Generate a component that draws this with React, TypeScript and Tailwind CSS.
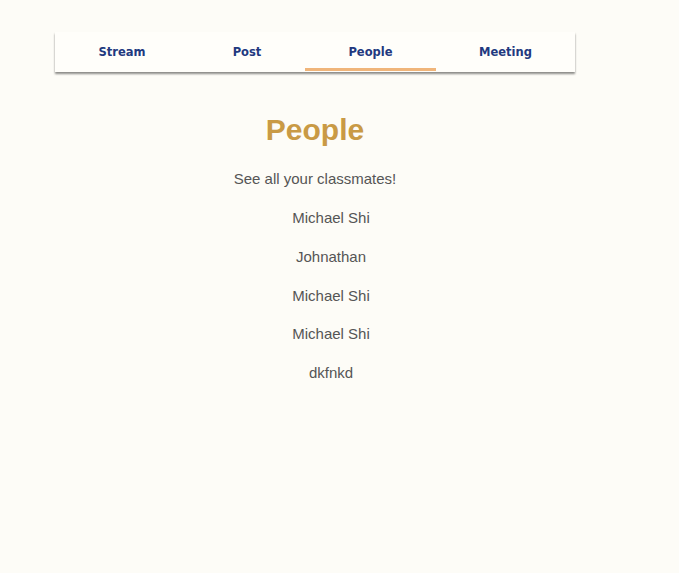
import React from "react";

const tabs = [
    { name: "Stream", w: "w-[134px]" },
    { name: "Post", w: "w-[116px]" },
    { name: "People", w: "w-[131px]", active: true },
    { name: "Meeting", w: "w-[139px]" },
];

const people = ["Michael Shi", "Johnathan", "Michael Shi", "Michael Shi", "dkfnkd"];

export default function App() {
    return (
        <div className="min-h-[573px] bg-[#fdfcf7] pt-[32px] font-['Liberation_Sans',Arial,sans-serif]">
            <div className="ml-[55px] w-[520px]">
                {/* tabs */}
                <nav className="flex h-[40px] bg-[#fffefa] shadow-[0_2px_2px_rgba(0,0,0,0.45)]">
                    {tabs.map((t) => (
                        <button
                            key={t.name}
                            className={`${t.w} relative flex items-center justify-center pt-[2px] text-[11.5px] font-bold text-[#22397f] font-['DejaVu_Sans',Verdana,sans-serif]`}
                        >
                            {t.name}
                            {t.active && <span className="absolute bottom-[1px] left-0 right-0 h-[3px] bg-[#f0b57a]" />}
                        </button>
                    ))}
                </nav>

                <div className="text-center">
                    <h1 className="mt-[40px] text-[30px] font-bold leading-[36px] text-[#c99a45]">People</h1>
                    <p className="mt-[22px] text-[15px] leading-[18px] text-[#555]">See all your classmates!</p>
                    <ul className="pl-[32px] mt-[11px]">
                        {people.map((p, i) => (
                            <li key={i} className="h-[38.75px] flex items-center justify-center text-[15px] text-[#555]">
                                {p}
                            </li>
                        ))}
                    </ul>
                </div>
            </div>
        </div>
    );
}
